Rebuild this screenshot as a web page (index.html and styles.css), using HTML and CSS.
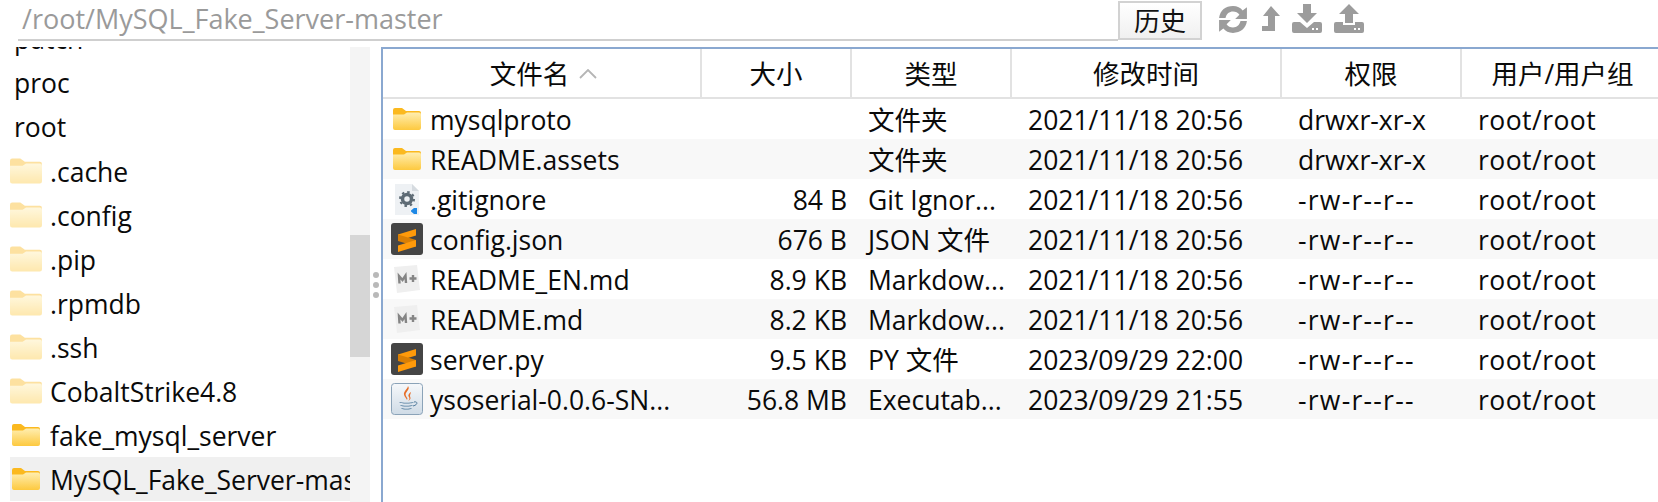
FILE: index.html
```html
<!DOCTYPE html>
<html lang="zh">
<head>
<meta charset="utf-8">
<title>文件管理</title>
<link rel="stylesheet" href="styles.css">
</head>
<body>
<svg class="defs" width="0" height="0" aria-hidden="true">
  <defs>
    <linearGradient id="fg" x1="0" y1="0" x2="0" y2="1"><stop offset="0" stop-color="#ffeeb0"/><stop offset="1" stop-color="#fdc93f"/></linearGradient>
    <linearGradient id="jg" x1="0" y1="0" x2="0" y2="1"><stop offset="0" stop-color="#f6f8fa"/><stop offset="1" stop-color="#cfdbe6"/></linearGradient>
    <symbol id="folder" viewBox="0 0 28 22">
      <path d="M0 2a2 2 0 0 1 2-2h7l4 3h13a2 2 0 0 1 2 2v3H0z" fill="#fbb91f"/>
      <path d="M0 6.500h11l3-2h12a2 2 0 0 1 2 2V20a2 2 0 0 1-2 2H2a2 2 0 0 1-2-2z" fill="url(#fg)"/>
    </symbol>
    <symbol id="sublime" viewBox="0 0 32 32">
      <rect width="32" height="32" rx="3" fill="#454545"/>
      <path d="M25 6v6.500L7 18v-6.500z" fill="#ff9a0a"/>
      <path d="M7 11.500 25 17v6.500L7 18z" fill="#d97f05"/>
      <path d="M25 17v6.500L7 29v-6.500z" fill="#ff9a0a"/>
    </symbol>
    <symbol id="md" viewBox="0 0 28 28">
      <path d="M1 2 24 0l3 25-23 3z" fill="#efefef"/>
      <path d="M6.500 18.500 6 11l3.500 4 3-4.500.5 7.500" fill="none" stroke="#858585" stroke-width="2.400"/>
      <path d="M16.500 13.500h7M20 10v7" fill="none" stroke="#858585" stroke-width="2.400"/>
    </symbol>
    <symbol id="gear" viewBox="0 0 24 31">
      <path d="M0 0h17l7 7v24H0z" fill="#eef1f4"/>
      <path d="M17 0v7h7z" fill="#d6dbe0"/>
      <circle cx="12" cy="15" r="4.500" fill="none" stroke="#5e6b75" stroke-width="3.500"/>
      <circle cx="12" cy="15" r="7" fill="none" stroke="#5e6b75" stroke-width="2" stroke-dasharray="2.500 3"/>
      <path d="M16 26.500l3-2.500 3 0v6h-3l-3-2.500z" fill="#1e88e5"/>
    </symbol>
    <symbol id="java" viewBox="0 0 32 32">
      <rect x=".5" y=".5" width="31" height="31" rx="3" fill="url(#jg)" stroke="#8ba3b8"/>
      <path d="M17 3c3 4-4 6-2 10 1 2 2 2 1 4-1-3-5-5-2-9 1-2 3-3 3-5zM20 9c-3 2-3 4-2 5 1 2 0 3-1 4 4-2 2-4 2-5 0-2 1-3 1-4z" fill="#e76f2a"/>
      <path d="M8 19c3 1 12 1 15 0-1 2-14 2-15 0zM9 22c3 1 10 1 13 0-1 2-12 2-13 0zM10 25c3 1 8 1 11 0-1 2-10 2-11 0z" fill="#4f7a9c"/>
      <path d="M23 19c4-1 4 3-1 4" fill="none" stroke="#4f7a9c"/>
    </symbol>
  </defs>
</svg>
<div class="app">
  <header class="topbar">
    <div class="path">/root/MySQL_Fake_Server-master</div>
    <button class="history" type="button">历史</button>
    <div class="tools">
      <svg class="tool refresh" viewBox="0 0 28 27"><path d="M1 12C2 5 7 1 14 1c4 0 7 1.500 9 4l4-3v11H16l4-4c-1.500-2-3.500-3-6-3-3.500 0-6 2-7 6zM27 15c-1 7-6 11-13 11-4 0-7-1.500-9-4l-4 3V14h11l-4 4c1.500 2 3.500 3 6 3 3.500 0 6-2 7-6z"/></svg>
      <svg class="tool up" viewBox="0 0 18 25"><path d="M9 0l9 10h-5v15H0v-5h6V10H1z"/></svg>
      <svg class="tool tray" viewBox="0 0 30 29"><path d="M11 0h8v9h6L15 19 5 9h6z"/><path d="M2 18h6l7 6 7-6h6a2 2 0 0 1 2 2v7a2 2 0 0 1-2 2H2a2 2 0 0 1-2-2v-7a2 2 0 0 1 2-2z"/><rect x="20" y="24" width="2" height="2" fill="#fff"/><rect x="24" y="24" width="2" height="2" fill="#fff"/></svg>
      <svg class="tool tray" viewBox="0 0 30 29"><path d="M15 0l10 10h-6v9h-8v-9H5z"/><path d="M2 18h7v3h12v-3h7a2 2 0 0 1 2 2v7a2 2 0 0 1-2 2H2a2 2 0 0 1-2-2v-7a2 2 0 0 1 2-2z"/><rect x="20" y="24" width="2" height="2" fill="#fff"/><rect x="24" y="24" width="2" height="2" fill="#fff"/></svg>
    </div>
  </header>
  <main class="body">
    <nav class="tree">
      <div class="tree-scroll">
        <div class="node plain">patch</div>
        <div class="node plain">proc</div>
        <div class="node plain">root</div>
        <div class="node"><svg class="ficon faded"><use href="#folder"/></svg><span>.cache</span></div>
        <div class="node"><svg class="ficon faded"><use href="#folder"/></svg><span>.config</span></div>
        <div class="node"><svg class="ficon faded"><use href="#folder"/></svg><span>.pip</span></div>
        <div class="node"><svg class="ficon faded"><use href="#folder"/></svg><span>.rpmdb</span></div>
        <div class="node"><svg class="ficon faded"><use href="#folder"/></svg><span>.ssh</span></div>
        <div class="node"><svg class="ficon faded"><use href="#folder"/></svg><span>CobaltStrike4.8</span></div>
        <div class="node"><svg class="ficon solid"><use href="#folder"/></svg><span>fake_mysql_server</span></div>
        <div class="node selected"><svg class="ficon solid"><use href="#folder"/></svg><span>MySQL_Fake_Server-master</span></div>
      </div>
    </nav>
    <div class="scrollbar"><div class="thumb"></div></div>
    <div class="splitter"><i></i><i></i><i></i></div>
    <section class="files">
      <div class="row head">
        <div class="hc hname">文件名<svg class="sort" viewBox="0 0 18 10"><path d="M1 9l8-8 8 8" fill="none" stroke="#b5b5b5" stroke-width="1.800"/></svg></div>
        <div class="hc">大小</div>
        <div class="hc">类型</div>
        <div class="hc">修改时间</div>
        <div class="hc">权限</div>
        <div class="hc last">用户/用户组</div>
      </div>
      <div class="row"><div class="name"><svg class="ico f"><use href="#folder"/></svg>mysqlproto</div><div class="size"></div><div>文件夹</div><div>2021/11/18 20:56</div><div>drwxr-xr-x</div><div class="own">root/root</div></div>
      <div class="row alt"><div class="name"><svg class="ico f"><use href="#folder"/></svg>README.assets</div><div class="size"></div><div>文件夹</div><div>2021/11/18 20:56</div><div>drwxr-xr-x</div><div class="own">root/root</div></div>
      <div class="row"><div class="name"><svg class="ico g"><use href="#gear"/></svg>.gitignore</div><div class="size">84 B</div><div>Git Ignor...</div><div>2021/11/18 20:56</div><div class="dash">-rw-r--r--</div><div class="own">root/root</div></div>
      <div class="row alt"><div class="name"><svg class="ico b"><use href="#sublime"/></svg>config.json</div><div class="size">676 B</div><div>JSON 文件</div><div>2021/11/18 20:56</div><div class="dash">-rw-r--r--</div><div class="own">root/root</div></div>
      <div class="row"><div class="name"><svg class="ico m"><use href="#md"/></svg>README_EN.md</div><div class="size">8.9 KB</div><div>Markdow...</div><div>2021/11/18 20:56</div><div class="dash">-rw-r--r--</div><div class="own">root/root</div></div>
      <div class="row alt"><div class="name"><svg class="ico m"><use href="#md"/></svg>README.md</div><div class="size">8.2 KB</div><div>Markdow...</div><div>2021/11/18 20:56</div><div class="dash">-rw-r--r--</div><div class="own">root/root</div></div>
      <div class="row"><div class="name"><svg class="ico b"><use href="#sublime"/></svg>server.py</div><div class="size">9.5 KB</div><div>PY 文件</div><div>2023/09/29 22:00</div><div class="dash">-rw-r--r--</div><div class="own">root/root</div></div>
      <div class="row alt"><div class="name"><svg class="ico b"><use href="#java"/></svg>ysoserial-0.0.6-SN...</div><div class="size">56.8 MB</div><div>Executab...</div><div>2023/09/29 21:55</div><div class="dash">-rw-r--r--</div><div class="own">root/root</div></div>
    </section>
  </main>
</div>
</body>
</html>
```
FILE: styles.css
```css
* { box-sizing: border-box; }
html, body { margin: 0; height: 100%; background: #fff; overflow: hidden; }
body { font: 26.5px/1 "Open Sans", "Noto Sans CJK SC", sans-serif; color: #0a0a0a; }
.defs { position: absolute; }
.app { width: 1658px; height: 502px; display: flex; flex-direction: column; }
.topbar { height: 47px; display: flex; align-items: flex-start; padding-left: 18px; }
.path { width: 1100px; height: 41px; border-bottom: 2px solid #cfcfcf; color: #9a9a9a; font-size: 27px; line-height: 38px; padding-left: 4px; white-space: nowrap; }
.history { width: 84px; height: 39px; margin-top: 1px; border: 2px solid #d2d2d2; background: linear-gradient(#fff, #f0f0f0); font: inherit; font-size: 26px; color: #111; padding: 0; }
.tools { display: flex; align-items: flex-start; margin-left: 16px; padding-top: 5px; }
.tool { fill: #9c9c9c; display: block; }
.refresh { width: 30px; height: 29px; }
.up { width: 18px; height: 25px; margin: 1px 0 0 14px; }
.tray { width: 30px; height: 29px; margin-left: 12px; margin-top: -1px; }
.body { flex: 1; display: flex; min-height: 0; }
.tree { width: 350px; overflow: hidden; padding-left: 10px; flex: none; }
.tree-scroll { margin-top: -30px; }
.node { height: 44px; display: flex; align-items: center; padding-left: 2px; white-space: nowrap; }
.node span { margin-left: 10px; padding-top: 2px; }
.plain { padding-left: 4px; }
.ficon { flex: none; display: block; }
.faded { width: 32px; height: 26px; margin-left: -2px; opacity: .42; }
.solid { width: 28px; height: 22px; }
.faded + span { margin-left: 8px; }
.selected { background: #f0f0f0; }
.scrollbar { width: 20px; background: #f4f4f4; flex: none; padding-top: 188px; }
.thumb { height: 122px; background: #d6d6d6; }
.splitter { width: 11px; flex: none; display: flex; flex-direction: column; gap: 4px; align-items: center; padding: 225px 0 0 0; }
.splitter i { width: 6px; height: 6px; border-radius: 50%; background: #b9b9b9; }
.files { flex: 1; border-left: 2px solid #8aa8d0; border-top: 2px solid #8aa8d0; }
.row { display: grid; grid-template-columns: 319px 150px 160px 270px 180px 1fr; height: 40px; align-items: center; white-space: nowrap; }
.row > div { padding-left: 16px; padding-top: 2px; }
.row > .name { display: flex; align-items: center; padding-left: 9px; }
.row > .size { text-align: right; padding: 2px 5px 0 0; }
.dash { letter-spacing: 1.25px; }
.own { letter-spacing: .45px; }
.alt { background: #f8f8f8; }
.head { height: 50px; border-bottom: 2px solid #e2e2e2; align-items: stretch; }
.row > .hc { display: flex; align-items: center; justify-content: center; gap: 10px; padding: 2px 0 0 0; border-right: 2px solid #e2e2e2; }
.row > .hc.last { border-right: 0; padding-left: 5px; }
.row > .hc.hname { padding-left: 4px; }
.sort { width: 18px; height: 10px; }
.ico { flex: none; display: block; margin-top: -2px; }
.f { width: 28px; height: 22px; margin-left: 1px; margin-right: 9px; }
.g { width: 24px; height: 31px; margin-left: 3px; margin-right: 11px; }
.b { width: 32px; height: 32px; margin-left: -1px; margin-right: 7px; }
.m { width: 28px; height: 28px; margin-left: 1px; margin-right: 9px; }
```
